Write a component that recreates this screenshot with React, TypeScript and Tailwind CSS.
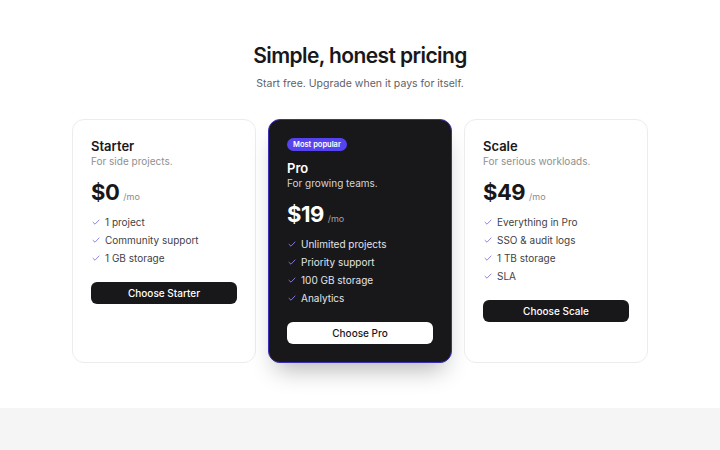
import React from 'react';

type Plan = {
  name: string;
  blurb: string;
  price: string;
  features: string[];
  cta: string;
  featured?: boolean;
};

const plans: Plan[] = [
  {
    name: 'Starter',
    blurb: 'For side projects.',
    price: '$0',
    features: ['1 project', 'Community support', '1 GB storage'],
    cta: 'Choose Starter',
  },
  {
    name: 'Pro',
    blurb: 'For growing teams.',
    price: '$19',
    features: ['Unlimited projects', 'Priority support', '100 GB storage', 'Analytics'],
    cta: 'Choose Pro',
    featured: true,
  },
  {
    name: 'Scale',
    blurb: 'For serious workloads.',
    price: '$49',
    features: ['Everything in Pro', 'SSO & audit logs', '1 TB storage', 'SLA'],
    cta: 'Choose Scale',
  },
];

const Check: React.FC = () => (
  <svg width="8" height="8" viewBox="0 0 12 12" fill="none" className="shrink-0">
    <path d="M1.5 6.5l3 2.8L10.5 3" stroke="#8b7fe0" strokeWidth="1.4" strokeLinecap="round" strokeLinejoin="round" />
  </svg>
);

const PlanCard: React.FC<{ plan: Plan }> = ({ plan }) => {
  const dark = plan.featured;
  return (
    <div
      className={
        dark
          ? 'flex flex-col rounded-xl border border-[#3b2fb8] bg-[#18181b] p-[18px] text-white shadow-[0_14px_24px_-8px_rgba(0,0,0,0.3)]'
          : 'flex flex-col rounded-xl border border-[#ececec] bg-white p-[18px] text-[#18181b]'
      }
    >
      {dark && (
        <span className="mb-[9px] self-start rounded-full bg-[#5443ee] px-[6px] text-[7.5px] font-semibold leading-[13px] text-white">
          Most popular
        </span>
      )}
      <h3 className="text-[13px] font-semibold leading-[16px]">{plan.name}</h3>
      <p className={`text-[10px] leading-[14px] ${dark ? 'text-[#d4d4d8]' : 'text-[#8f8f8f]'}`}>{plan.blurb}</p>
      <div className="mt-[10px] flex items-baseline gap-[4px]">
        <span className="text-[22px] font-bold leading-[28px] tracking-[-0.5px]">{plan.price}</span>
        <span className={`text-[9px] ${dark ? 'text-[#a1a1aa]' : 'text-[#8a8a8a]'}`}>/mo</span>
      </div>
      <ul className="mt-[7px] flex flex-col">
        {plan.features.map((f) => (
          <li
            key={f}
            className={`flex h-[18px] items-center gap-[5px] pl-[1px] text-[10px] ${dark ? 'text-[#e4e4e7]' : 'text-[#3f3f46]'}`}
          >
            <Check />
            {f}
          </li>
        ))}
      </ul>
      <button
        className={
          dark
            ? 'mt-[15px] h-[22px] rounded-md bg-white text-[10px] font-medium text-[#18181b]'
            : 'mt-[15px] h-[22px] rounded-md bg-[#18181b] text-[10px] font-medium text-white'
        }
      >
        {plan.cta}
      </button>
    </div>
  );
};

export default function App() {
  return (
    <div className="min-h-[450px] bg-white font-['Inter','Liberation_Sans',sans-serif]">
      <section className="px-6 pb-[45px] pt-[42px]">
        <h1 className="text-center text-[21px] font-semibold leading-[28px] tracking-[-0.6px] text-[#18181b]">
          Simple, honest pricing
        </h1>
        <p className="mt-[6px] text-center text-[10.5px] leading-[16px] text-[#5f5f66]">
          Start free. Upgrade when it pays for itself.
        </p>
        <div className="mx-auto mt-[27px] grid max-w-[576px] grid-cols-3 gap-3">
          {plans.map((p) => (
            <PlanCard key={p.name} plan={p} />
          ))}
        </div>
      </section>
      <div className="h-[42px] bg-[#f5f5f5]" />
    </div>
  );
}
